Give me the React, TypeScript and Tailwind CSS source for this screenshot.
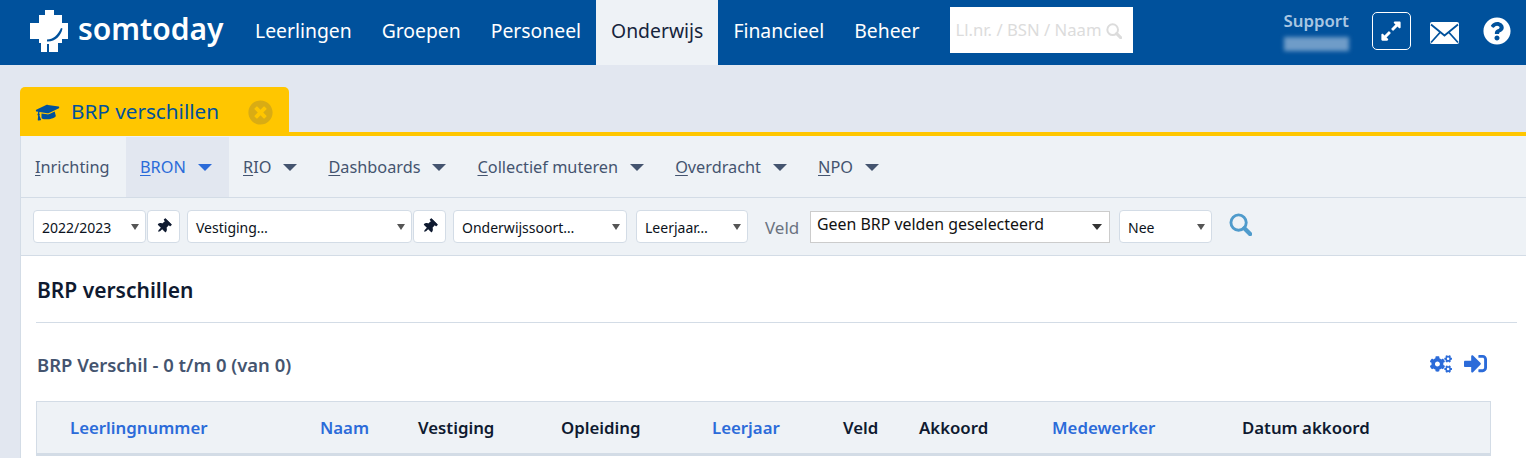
import { FaCogs, FaExpandAlt, FaGraduationCap, FaQuestionCircle, FaSignInAlt, FaThumbtack, FaTimesCircle } from "react-icons/fa";

const topNav = ["Leerlingen", "Groepen", "Personeel", "Onderwijs", "Financieel", "Beheer"];

const subNav = [
  { key: "C", rest: "ollectief muteren" },
  { key: "O", rest: "verdracht" },
  { key: "N", rest: "PO" },
];

const columns = [
  { label: "Leerlingnummer", width: "w-[250px]", link: true },
  { label: "Naam", width: "w-[98px]", link: true },
  { label: "Vestiging", width: "w-[143px]", link: false },
  { label: "Opleiding", width: "w-[151px]", link: false },
  { label: "Leerjaar", width: "w-[131px]", link: true },
  { label: "Veld", width: "w-[76px]", link: false },
  { label: "Akkoord", width: "w-[133px]", link: false },
  { label: "Medewerker", width: "w-[190px]", link: true },
  { label: "Datum akkoord", width: "w-[200px]", link: false },
];

const Logo = () => (
  <svg viewBox="0 0 38 42" className="h-[42px] w-[38px] shrink-0">
    <path d="M15 0H24V5H32V13H38V29H32V33H28V42H19V34H17V42H11V33H9V29H0V13H9V5H15Z" fill="#fff" />
    <path d="M17 29.5C23 29.5 28 25 31 18L32.5 18.5C31 26 25 32 17 31.5Z" fill="#00519c" />
  </svg>
);

const Envelope = () => (
  <svg viewBox="0 0 29 22" className="h-[22px] w-[29px]">
    <rect x="0" y="0" width="29" height="22" rx="2" fill="#fff" />
    <path d="M1 2.5l13.5 11L28 2.5M1 20.5l9-10M28 20.5l-9-10" fill="none" stroke="#00519c" strokeWidth="1.8" />
  </svg>
);

const Magnifier = ({ className }: { className: string }) => (
  <svg viewBox="0 0 24 24" className={className} fill="none" stroke="currentColor">
    <circle cx="10" cy="10" r="8" strokeWidth="3" />
    <path d="M16 16l6 6" strokeWidth="4.5" strokeLinecap="round" />
  </svg>
);

const Caret = ({ className }: { className: string }) => <span className={`h-0 w-0 border-x-[7px] border-t-[7px] border-x-transparent ${className}`}></span>;

const SelectBox = ({ label, width }: { label: string; width: string }) => (
  <div className={`flex h-[33px] items-center justify-between rounded-[4px] border border-[#d3dce6] bg-white pl-2 pr-[6px] text-[14px] text-[#0b1220] ${width}`}>
    <span className="translate-y-px">{label}</span>
    <span className="h-0 w-0 border-x-[4px] border-t-[6px] border-x-transparent border-t-[#555]"></span>
  </div>
);

const PinButton = () => (
  <div className="flex h-[33px] w-[33px] items-center justify-center rounded-[4px] border border-[#d3dce6] bg-white text-[#0f1a30]">
    <FaThumbtack className="h-[15px] w-[15px] rotate-45" />
  </div>
);

const App = () => {
  return (
    <div className="h-[458px] w-[1526px] overflow-hidden bg-[#e2e7f0] font-['Noto_Sans',sans-serif]">
      <header className="flex h-[65px] items-center bg-[#00519c] text-white">
        <div className="mb-[3px] ml-[30px] flex w-[210px] items-center gap-[10px]">
          <Logo />
          <span className="mb-[5px] text-[30px] font-semibold leading-none">somtoday</span>
        </div>
        <nav className="flex h-full">
          {topNav.map((item) => (
            <div
              key={item}
              className={`flex h-full items-center px-[15px] pb-[3px] text-[19.35px] ${item === "Onderwijs" ? "bg-[#eef2f6] text-[#16243c]" : ""}`}
            >
              {item}
            </div>
          ))}
        </nav>
        <div className="mb-[5px] ml-[15px] flex h-[46px] w-[183px] items-center bg-white pl-[6px] text-[16.7px] text-[#dcdcdc]">
          <span>Ll.nr. / BSN / Naam</span>
          <Magnifier className="ml-[4px] h-[16px] w-[16px] translate-y-px text-[#dcdcdc]" />
        </div>
        <div className="mb-[4px] ml-[151px] flex w-[66px] flex-col">
          <span className="text-[16.8px] font-semibold leading-[22px] text-[#a9c6e2]">Support</span>
          <div className="mt-[5px] h-[14px] w-[65px] bg-[#6f9cc8] blur-[2px]"></div>
        </div>
        <div className="mb-[3px] ml-[22px] flex h-[38px] w-[39px] items-center justify-center rounded-[5px] border border-white">
          <FaExpandAlt className="h-[22px] w-[22px]" />
        </div>
        <div className="ml-[19px]">
          <Envelope />
        </div>
        <FaQuestionCircle className="mb-[3px] ml-[24px] h-[28px] w-[28px]" />
      </header>

      <div className="ml-5 mt-[22px]">
        <div className="flex h-[49px] border-b-[4px] border-[#ffc600]">
          <div className="flex h-[49px] w-[269px] items-center rounded-t-[5px] bg-[#ffc600] pl-4 pt-px text-[#00519c]">
            <FaGraduationCap className="h-[24px] w-[24px] -rotate-[8deg]" />
            <span className="ml-[11px] text-[20.7px]">BRP verschillen</span>
            <FaTimesCircle className="ml-[29px] h-[25px] w-[25px] text-[#d9ac14]" />
          </div>
        </div>

        <div className="border-l border-[#d3dce6] bg-[#eef2f6]">
          <div className="flex h-[62px] items-center border-b border-[#d3dce6] pt-px text-[16.3px] text-[#44546f]">
            <span className="w-[105px] shrink-0 pl-[14px]">
              <span className="underline decoration-1 underline-offset-2">I</span>nrichting
            </span>
            <div className="flex h-full w-[103px] items-center bg-[#e2e7f0] pl-[14px] text-[#2b6bd9]">
              <span>
                <span className="underline decoration-1 underline-offset-2">B</span>RON
              </span>
              <Caret className="ml-[12px] border-t-[#2b6bd9]" />
            </div>
            <div className="ml-[14px] flex items-center">
              <span>
                <span className="underline decoration-1 underline-offset-2">R</span>IO
              </span>
              <Caret className="ml-[12px] border-t-[#44546f]" />
            </div>
            <div className="ml-[31px] flex items-center">
              <span>
                <span className="underline decoration-1 underline-offset-2">D</span>ashboards
              </span>
              <Caret className="ml-[12px] border-t-[#44546f]" />
            </div>
            {subNav.map((item) => (
              <div key={item.key} className="ml-[31px] flex items-center">
                <span>
                  <span className="underline decoration-1 underline-offset-2">{item.key}</span>
                  {item.rest}
                </span>
                <Caret className="ml-[12px] border-t-[#44546f]" />
              </div>
            ))}
          </div>

          <div className="flex h-[58px] items-center border-b border-[#d3dce6] pl-3">
            <SelectBox label="2022/2023" width="w-[113px]" />
            <div className="ml-[1px]"><PinButton /></div>
            <div className="ml-[7px]"><SelectBox label="Vestiging…" width="w-[225px]" /></div>
            <div className="ml-[1px]"><PinButton /></div>
            <div className="ml-[7px]"><SelectBox label="Onderwijssoort…" width="w-[174px]" /></div>
            <div className="ml-[9px]"><SelectBox label="Leerjaar…" width="w-[112px]" /></div>
            <span className="ml-[17px] w-[34px] translate-y-px text-[17px] text-[#6b7280]">Veld</span>
            <div className="ml-[11px] flex h-[32px] w-[300px] items-center justify-between border border-[#cccccc] bg-white pl-[6px] pr-[7px] text-[15.9px] leading-none text-[#111]">
              <span className="-translate-y-[2px]">Geen BRP velden geselecteerd</span>
              <span className="h-0 w-0 border-x-[5px] border-t-[6px] border-x-transparent border-t-[#333]"></span>
            </div>
            <div className="ml-[9px]"><SelectBox label="Nee" width="w-[93px]" /></div>
            <Magnifier className="mb-[5px] ml-[17px] h-[23px] w-[23px] text-[#4f9bcc]" />
          </div>

          <main className="h-[300px] bg-white pl-[15px] pr-[9px]">
            <div className="flex h-[67px] items-center border-b border-[#d3dce6] pl-px pt-[3px]">
              <h1 className="text-[21px] font-semibold text-[#0f1a30]">BRP verschillen</h1>
            </div>
            <div className="flex h-[78px] items-center justify-between pl-px pr-[30px] pt-[6px]">
              <h2 className="text-[18.45px] font-semibold text-[#44546f]">BRP Verschil - 0 t/m 0 (van 0)</h2>
              <div className="flex items-center gap-[12px] pb-[3px] text-[#2b6bd9]">
                <FaCogs className="h-[22px] w-[22px]" />
                <FaSignInAlt className="h-[23px] w-[23px]" />
              </div>
            </div>
            <div className="flex h-[55px] w-[1455px] items-center border border-b-[3px] border-[#d3dce6] bg-[#eef2f6] pl-[33px] text-[16.8px] font-semibold">
              {columns.map((col) => (
                <div key={col.label} className={`${col.width} shrink-0 ${col.link ? "text-[#2b6bd9]" : "text-[#0f1a30]"}`}>
                  {col.label}
                </div>
              ))}
            </div>
          </main>
        </div>
      </div>
    </div>
  );
};

export default App;
